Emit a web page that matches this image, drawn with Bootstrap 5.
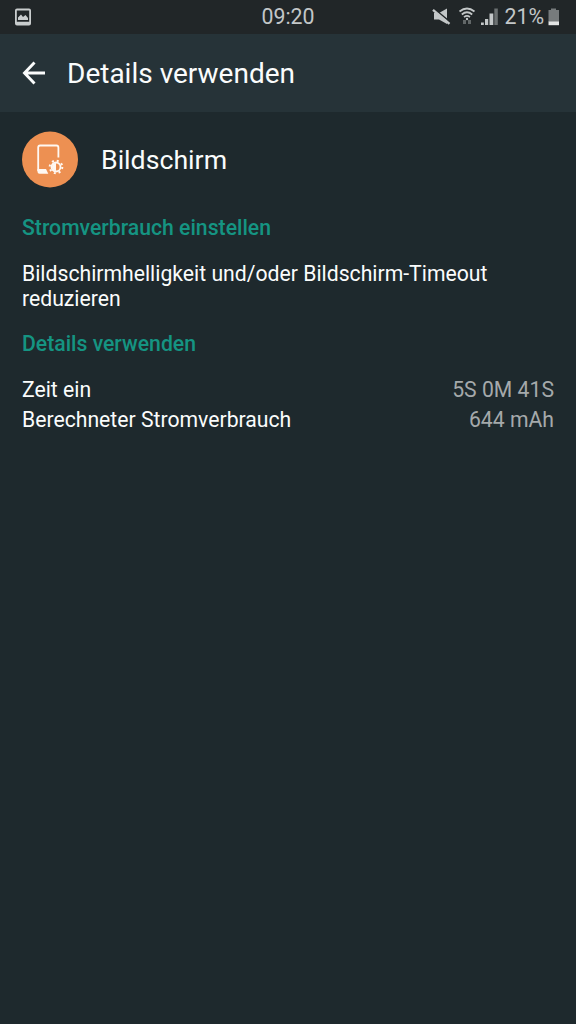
<!DOCTYPE html>
<html lang="de">
<head>
<meta charset="utf-8">
<meta name="viewport" content="width=device-width, initial-scale=1">
<title>Details verwenden</title>
<link href="https://cdn.jsdelivr.net/npm/bootstrap@5.3.0/dist/css/bootstrap.min.css" rel="stylesheet">
<style>
body { background: #1e292d; color: #fafcfc; font-family: Roboto, sans-serif; font-size: 21.2px; line-height: 25px; }
.status-bar { height: 34px; background: #212628; color: #c3c7c8; font-size: 21.3px; padding: 0 16px 1px 14px; }
.status-bar svg, .app-bar svg, .app-icon svg { display: block; flex: none; }
.app-bar { height: 78px; background: #263338; padding-left: 22px; }
.screen-title, .app-name { font-size: 26.7px; line-height: 32px; font-weight: 400; margin: 0; }
.screen-title { font-size: 28px; margin-left: 21px; padding-top: 1px; }
.app-name { margin-left: 23px; padding-top: 1px; }
.page { padding: 19px 22px; }
.section-title { color: #159482; font-size: 21.2px; line-height: 25px; font-weight: 500; margin: 0; }
.first-title { margin-top: 27px; }
.advice { margin: 21px 0 0; }
.usage-list { margin-top: 19px; }
.usage-row { line-height: 30px; }
.usage-value { color: #a5a9ab; }
</style>
</head>
<body>
<header>
  <div class="status-bar d-flex align-items-center position-relative">
    <svg width="18" height="18" viewBox="0 0 18 18"><path fill="#c9cdce" fill-rule="evenodd" d="M3 .5h12Q17 .5 17 2.500v13q0 2-2 2H3q-2 0-2-2v-13q0-2 2-2zM2.800 2.500v11.200h12.400V2.500zM4 12V9.500l3-3 2 2.500 2.500-2 2.500 3V12z"/></svg>
    <span class="position-absolute start-50 translate-middle-x">09:20</span>
    <div class="d-flex align-items-center ms-auto">
      <svg width="72" height="24" viewBox="432 5 72 24">
        <path fill="#c3c7c8" d="M434 13h5l8-4.500V24l-8-4.500h-5z"/>
        <path stroke="#212628" stroke-width="1.600" d="M433 7.800l17 14"/>
        <path stroke="#c3c7c8" stroke-width="2.400" d="M433 9.800l16.500 14"/>
        <g fill="none" stroke="#c3c7c8" stroke-width="1.700"><path d="M459.500 11.500q7.500-6 15 0M461.800 14.500q5.200-4.500 10.400 0M464 17.200q3-2.500 6 0"/></g>
        <circle cx="467" cy="19" r="1.200" fill="#c3c7c8"/>
        <path fill="#626768" d="M463 20h3v4h-3zM468 20h3v4h-3z"/>
        <path fill="#c3c7c8" d="M481 22.500h2.800V25H481zM485 19h3.200v6H485zM489.500 13.500h3.800V25h-3.800z"/>
        <path fill="#6c7172" d="M494.300 8.500h3.500V25h-3.500z"/>
      </svg>
      <span>21%</span>
      <svg class="ms-1" width="12" height="18" viewBox="0 0 12 18"><path fill="#777b7c" d="M3 .5h5V2h3v12H.5V2H3z"/><path fill="#e3e5e5" d="M.5 13.500H11v3.700H.5z"/></svg>
    </div>
  </div>
  <nav class="app-bar d-flex align-items-center" aria-label="Navigation">
    <svg width="24" height="24" viewBox="0 0 24 24" fill="none" stroke="#fafcfc" stroke-width="2.900"><path d="M12.500 1.500L2.500 12l10 10.500M2.500 12H23"/></svg>
    <h1 class="screen-title">Details verwenden</h1>
  </nav>
</header>
<main class="page">
  <div class="app-icon d-flex align-items-center">
    <svg width="56" height="57" viewBox="22 131 56 57">
      <circle cx="50" cy="159.500" r="28" fill="#ed9052"/>
      <path fill="none" stroke="#fff8f2" stroke-width="1.800" d="M38.200 171V147.500q0-2 2-2h16.200q2 0 2 2v10"/>
      <path fill="#fff8f2" d="M37.500 169H46l2.300 4.800H39.500q-2 0-2-2z"/>
      <circle cx="56" cy="167" r="6.300" fill="none" stroke="#fff8f2" stroke-width="2" stroke-dasharray="2 2.948"/>
      <circle cx="56" cy="167" r="4.500" fill="none" stroke="#fff8f2" stroke-width="1.800"/>
      <path fill="#fff8f2" d="M56 163a4 4 0 0 0 0 8z"/>
    </svg>
    <h2 class="app-name">Bildschirm</h2>
  </div>
  <section>
    <h3 class="section-title first-title">Stromverbrauch einstellen</h3>
    <p class="advice">Bildschirmhelligkeit und/oder Bildschirm-Timeout reduzieren</p>
  </section>
  <section>
    <h3 class="section-title mt-3 pt-1">Details verwenden</h3>
    <div class="usage-list">
      <div class="usage-row d-flex justify-content-between"><span>Zeit ein</span><span class="usage-value">5S 0M 41S</span></div>
      <div class="usage-row d-flex justify-content-between"><span>Berechneter Stromverbrauch</span><span class="usage-value">644 mAh</span></div>
    </div>
  </section>
</main>
<script src="https://cdn.jsdelivr.net/npm/bootstrap@5.3.0/dist/js/bootstrap.bundle.min.js"></script>
</body>
</html>
